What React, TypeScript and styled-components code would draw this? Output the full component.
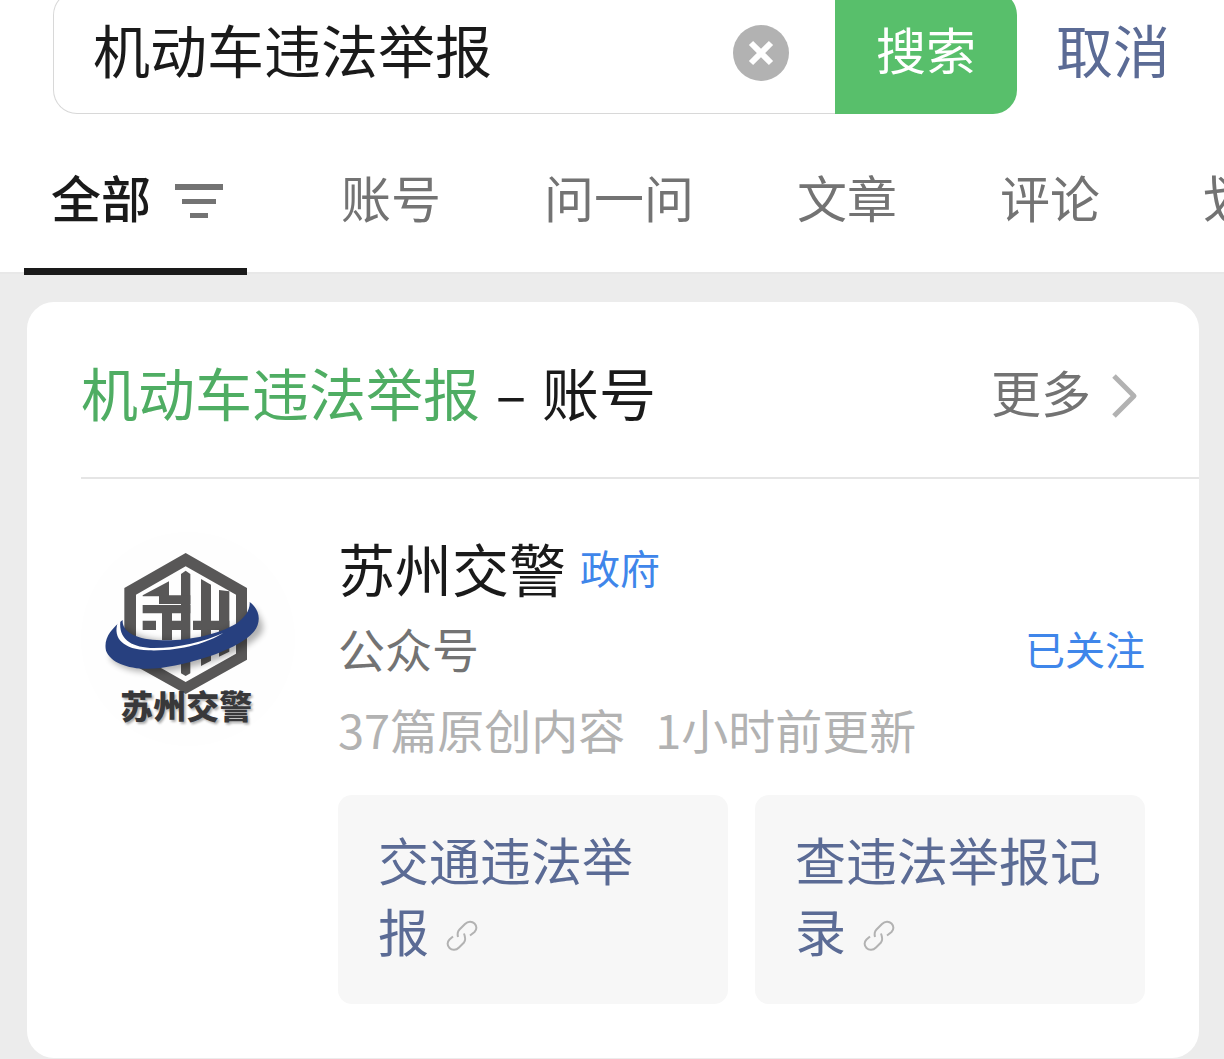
import React from "react";
import styled, { createGlobalStyle } from "styled-components";

const GlobalStyle = createGlobalStyle`
  * { box-sizing: border-box; }
  body {
    margin: 0;
    background: #ececec;
    color: #1a1a1a;
    font-family: "Noto Sans CJK SC", sans-serif;
    overflow-x: hidden;
  }
  button, input { font: inherit; color: inherit; border: 0; padding: 0; background: none; }
  button { cursor: pointer; }
  h1, h2, p { margin: 0; font-weight: 400; }
  a { color: inherit; text-decoration: none; }
`;

const Page = styled.div`
  overflow: hidden;
`;

const Header = styled.header`
  margin-top: -9px;
  background: #fff;
  border-bottom: 2px solid #e8e8e8;
`;

const SearchRow = styled.form`
  display: flex;
  height: 123px;
  padding: 0 54px 0 53px;
`;

const SearchField = styled.div`
  flex: 1;
  min-width: 0;
  display: flex;
  align-items: center;
  padding: 0 46px 0 39px;
  border: 1px solid #d8d8d8;
  border-right: 0;
  border-radius: 24px 0 0 24px;
`;

const SearchInput = styled.input`
  flex: 1;
  min-width: 0;
  height: 100px;
  padding-bottom: 10px;
  font-size: 57px;
  outline: none;
`;

const ClearButton = styled.button`
  display: flex;
  flex: none;
`;

const SearchButton = styled.button`
  flex: none;
  width: 182px;
  padding-bottom: 10px;
  font-size: 50px;
  color: #fff;
  background: #58bf6b;
  border-radius: 0 24px 24px 0;
`;

const CancelButton = styled.button`
  flex: none;
  margin-left: 39px;
  padding-bottom: 10px;
  font-size: 57px;
  color: #5b6b95;
`;

const Tabs = styled.nav`
  display: flex;
  gap: 52px;
  height: 158px;
  padding-left: 24px;
`;

const Tab = styled.button<{ $active?: boolean }>`
  display: flex;
  flex: none;
  align-items: center;
  gap: 24px;
  height: 161px;
  margin-right: ${(p) => (p.$active ? "15px" : "0")};
  padding: 20px 24px 0 27px;
  font-size: 50px;
  font-weight: ${(p) => (p.$active ? 500 : 400)};
  color: ${(p) => (p.$active ? "#1a1a1a" : "#737373")};
  border-bottom: 7px solid ${(p) => (p.$active ? "#1a1a1a" : "transparent")};
`;

const TabLabel = styled.span`
  padding-bottom: 10px;
`;

const Card = styled.section`
  margin: 28px 25px 1px 27px;
  padding: 54px 0 54px 54px;
  background: #fff;
  border-radius: 27px;
`;

const CardHeader = styled.div`
  display: flex;
  align-items: center;
  justify-content: space-between;
  padding: 0 61px 41px 0;
  border-bottom: 2px solid #e5e5e5;
`;

const CardTitle = styled.h1`
  padding-bottom: 10px;
  font-size: 57px;
  line-height: 70px;
`;

const Keyword = styled.span`
  color: #4fad63;
`;

const Dash = styled.span`
  margin: 0 3px;
`;

const MoreLink = styled.a`
  display: flex;
  align-items: center;
  gap: 21px;
  font-size: 50px;
  line-height: 70px;
  color: #737373;
`;

const MoreLabel = styled.span`
  padding-bottom: 10px;
`;

const Account = styled.article`
  display: flex;
  gap: 43px;
  padding: 53px 54px 0 0;
`;

const Avatar = styled.svg`
  flex: none;
  width: 214px;
  height: 214px;
`;

const Details = styled.div`
  flex: 1;
  min-width: 0;
`;

const Summary = styled.div`
  display: flex;
  align-items: center;
  justify-content: space-between;
  line-height: 92px;
`;

const NameLine = styled.div`
  display: flex;
  align-items: center;
  gap: 14px;
  line-height: 70px;
`;

const Name = styled.h2`
  font-size: 57px;
`;

const Badge = styled.span`
  font-size: 40px;
  color: #3f86ea;
`;

const Kind = styled.p`
  font-size: 47px;
  color: #737373;
`;

const Meta = styled.p`
  display: flex;
  gap: 30px;
  font-size: 47px;
  line-height: 70px;
  color: #b2b2b2;
`;

const FollowButton = styled.button`
  font-size: 40px;
  color: #3f86ea;
`;

const Services = styled.div`
  display: grid;
  grid-template-columns: 1fr 1fr;
  gap: 27px;
  margin-top: 31px;
`;

const Service = styled.a`
  padding: 29px 40px 38px;
  font-size: 51px;
  line-height: 71px;
  color: #5b6b95;
  background: #f7f7f7;
  border-radius: 14px;
`;

const NoWrap = styled.span`
  white-space: nowrap;
`;

const LinkGlyph = styled.svg`
  margin-left: 17px;
  vertical-align: baseline;
`;

const FilterIcon = () => (
  <svg width="48" height="34" viewBox="0 0 48 34" fill="#737373" aria-hidden="true">
    <path d="M0 0h48v6H0zM7 15h34v5H7zM15 29h18v5H15z" />
  </svg>
);

const ClearIcon = () => (
  <svg width="56" height="56" viewBox="0 0 56 56" aria-hidden="true">
    <circle cx="28" cy="28" r="28" fill="#b2b2b2" />
    <path d="M18 18l20 20M38 18L18 38" stroke="#fff" strokeWidth="6" />
  </svg>
);

const ChevronIcon = () => (
  <svg width="26" height="44" viewBox="0 0 26 44" fill="none" aria-hidden="true">
    <path d="M2 2l20 20L2 42" stroke="#b2b2b2" strokeWidth="5" strokeLinejoin="round" />
  </svg>
);

const LinkIcon = () => (
  <LinkGlyph width="32" height="32" viewBox="0 0 32 32" fill="none" stroke="#b2b2b2" strokeWidth="2" aria-hidden="true">
    <path d="M12 17C11 13 11.500 11.500 13.500 9.500L19 4C22 1 26 1 28.500 3.500C31 6 31 9.500 28.500 12L24 15.500" />
    <path d="M18 13.500C19.500 17.500 20 20 18 22.500L13 27.500C10 30.500 6 30.500 3.500 28C1 25.500 1 22 3.500 19.500L7 16.500" />
  </LinkGlyph>
);

const PoliceEmblem = () => (
  <Avatar viewBox="33 6 642 642" role="img" aria-label="苏州交警">
    <defs>
      <filter id="soft" x="-20%" y="-20%" width="140%" height="150%">
        <feGaussianBlur stdDeviation="9" />
      </filter>
      <filter id="softText" x="-20%" y="-20%" width="140%" height="150%">
        <feGaussianBlur stdDeviation="3" />
      </filter>
    </defs>
    <circle cx="354" cy="327" r="321" fill="#fefefe" />
    <path fill="#585757" fillRule="evenodd" d="M347 69L531 174V389L347 492L163 389V174zM347 109L198 194V371L347 456L498 371V194z" />
    <g fill="#585757">
      <path d="M333 132L347 122L361 132V430L347 438L333 430z" />
      <path d="M393 147L423 164V392L393 408z" />
      <path d="M447 180L478 184V365L447 380z" />
      <path d="M218 196L297 154V196H361V222H267V199H218z" />
      <path d="M218 225H361V250H218zM218 272H258V300H218zM276 249H306V330H276zM306 272H333V300H306zM369 272H478V300H369z" />
    </g>
    <path d="M160 285C215 345 345 340 440 312C500 292 535 265 550 232C580 275 592 300 560 325C500 375 410 405 300 424C220 436 150 420 120 385z" fill="#000" opacity="0.3" filter="url(#soft)" />
    <path fill="#27407f" d="M158 270C156 302 190 325 260 330C340 336 440 316 497 282C525 264 541 240 539 216C571 239 575 277 550 307C507 355 388 397 272 414C190 424 123 402 108 362C100 326 123 296 158 270z" />
    <path fill="#fff" d="M143 278C128 325 160 358 235 361C330 364 410 340 460 309C400 336 320 356 240 354C180 350 146 325 151 274z" />
    <g fontFamily="Noto Sans CJK SC" fontWeight="900" fontSize="99" textAnchor="middle">
      <text x="354" y="573" fill="#777" opacity="0.6" filter="url(#softText)">苏州交警</text>
      <text x="349" y="567" fill="#38383a">苏州交警</text>
    </g>
  </Avatar>
);

const tabs = ["全部", "账号", "问一问", "文章", "评论", "划线"];
const services = ["交通违法举报", "查违法举报记录"];

export default function App() {
  const [query, setQuery] = React.useState("机动车违法举报");
  const [active, setActive] = React.useState(tabs[0]);
  return (
    <Page>
      <GlobalStyle />
      <Header>
        <SearchRow onSubmit={(e) => e.preventDefault()}>
          <SearchField>
            <SearchInput aria-label="搜索" value={query} onChange={(e) => setQuery(e.target.value)} />
            <ClearButton type="button" aria-label="清除" onClick={() => setQuery("")}>
              <ClearIcon />
            </ClearButton>
          </SearchField>
          <SearchButton type="submit">搜索</SearchButton>
          <CancelButton type="button">取消</CancelButton>
        </SearchRow>
        <Tabs>
          {tabs.map((tab) => (
            <Tab key={tab} type="button" $active={tab === active} onClick={() => setActive(tab)}>
              <TabLabel>{tab}</TabLabel>
              {tab === "全部" && <FilterIcon />}
            </Tab>
          ))}
        </Tabs>
      </Header>
      <Card>
        <CardHeader>
          <CardTitle>
            <Keyword>机动车违法举报</Keyword> <Dash>–</Dash> 账号
          </CardTitle>
          <MoreLink href="#more">
            <MoreLabel>更多</MoreLabel>
            <ChevronIcon />
          </MoreLink>
        </CardHeader>
        <Account>
          <PoliceEmblem />
          <Details>
            <NameLine>
              <Name>苏州交警</Name>
              <Badge>政府</Badge>
            </NameLine>
            <Summary>
              <Kind>公众号</Kind>
              <FollowButton type="button">已关注</FollowButton>
            </Summary>
            <Meta>
              <span>37篇原创内容</span>
              <span>1小时前更新</span>
            </Meta>
            <Services>
              {services.map((label) => (
                <Service key={label} href={"#" + label}>
                  {label.slice(0, -1)}
                  <NoWrap>
                    {label.slice(-1)}
                    <LinkIcon />
                  </NoWrap>
                </Service>
              ))}
            </Services>
          </Details>
        </Account>
      </Card>
    </Page>
  );
}
